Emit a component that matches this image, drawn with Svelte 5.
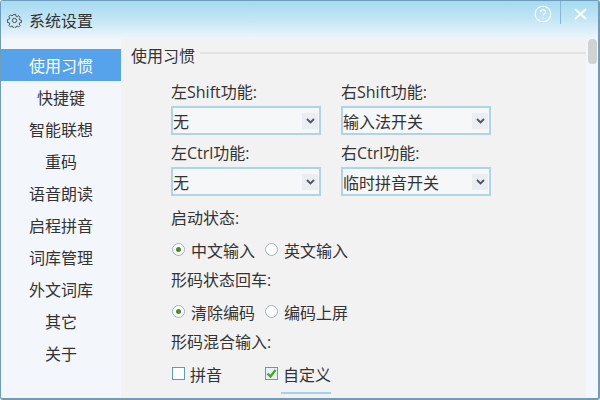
<script lang="ts">
  const menu = ["使用习惯", "快捷键", "智能联想", "重码", "语音朗读", "启程拼音", "词库管理", "外文词库", "其它", "关于"];
  let active = $state(0);
  const selects = [
    { label: "左Shift功能:", value: "无" },
    { label: "右Shift功能:", value: "输入法开关" },
    { label: "左Ctrl功能:", value: "无" },
    { label: "右Ctrl功能:", value: "临时拼音开关" }
  ];
  const radios = [
    { label: "启动状态:", options: ["中文输入", "英文输入"] },
    { label: "形码状态回车:", options: ["清除编码", "编码上屏"] }
  ];
</script>

<div class="window">
  <header class="titlebar">
    <svg class="gear" width="15" height="15" viewBox="0 0 16 16" fill="none" stroke="#4a4a4a" stroke-width="1">
      <circle cx="8" cy="8" r="2.3" />
      <path d="M6.8 1.5h2.4l.3 1.8 1.3.6 1.5-1 1.7 1.7-1 1.5.6 1.3 1.8.3v2.4l-1.8.3-.6 1.3 1 1.5-1.7 1.7-1.5-1-1.3.6-.3 1.8H6.8l-.3-1.8-1.3-.6-1.5 1-1.7-1.7 1-1.5-.6-1.3-1.8-.3V6.8l1.8-.3.6-1.3-1-1.5 1.7-1.7 1.5 1 1.3-.6z" />
    </svg>
    <span class="title">系统设置</span>
    <div class="controls">
      <button class="ctl help" aria-label="帮助">
        <svg width="18" height="18" viewBox="0 0 18 18" fill="none" stroke="#fff" stroke-width="1.1">
          <circle cx="9" cy="9" r="7.8" />
          <path d="M6.6 7.2c0-1.5 1.1-2.4 2.5-2.4s2.4.9 2.4 2.1c0 1.9-2.4 1.9-2.4 3.7" />
          <path d="M9.1 12.2v1.2" />
        </svg>
      </button>
      <button class="ctl close" aria-label="关闭">
        <svg width="13" height="12" viewBox="0 0 13 12" fill="none" stroke="#fff" stroke-width="2">
          <path d="M1 1l11 10M12 1l-11 10" />
        </svg>
      </button>
    </div>
  </header>

  <div class="body">
    <nav class="sidebar">
      {#each menu as item, i}
        <button class="item" class:active={i === active} onclick={() => (active = i)}>{item}</button>
      {/each}
    </nav>

    <main class="content">
      <div class="section-head">
        <span>使用习惯</span>
        <i></i>
      </div>

      <div class="form">
        <div class="select-grid">
          {#each selects as s}
            <div class="field">
              <div class="label">{s.label}</div>
              <div class="select">
                <span>{s.value}</span>
                <span class="arrow">
                  <svg width="9" height="6" viewBox="0 0 9 6" fill="none" stroke="#4c5560" stroke-width="1.8">
                    <path d="M1 1l3.5 3.4L8 1" />
                  </svg>
                </span>
              </div>
            </div>
          {/each}
        </div>

        {#each radios as group}
          <div class="label group-label">{group.label}</div>
          <div class="opts">
            {#each group.options as opt, i}
              <div class="opt">
                <span class="radio" class:on={i === 0}></span>
                <span>{opt}</span>
              </div>
            {/each}
          </div>
        {/each}

        <div class="label group-label">形码混合输入:</div>
        <div class="opts">
          <div class="opt tight">
            <span class="check"></span>
            <span>拼音</span>
          </div>
          <div class="opt tight">
            <span class="check checked">
              <svg width="11" height="11" viewBox="0 0 11 11" fill="none" stroke="#45a815" stroke-width="2.2">
                <path d="M1.5 5.5l3 3 5-6.5" />
              </svg>
            </span>
            <span class="underlined">自定义</span>
          </div>
        </div>
      </div>
    </main>

    <div class="scrollbar"><div class="thumb"></div></div>
  </div>
</div>

<style>
  :global(body) {
    margin: 0;
  }

  .window {
    width: 600px;
    height: 400px;
    box-sizing: border-box;
    border: 1px solid #6f9cbc;
    border-width: 1px 2px 2px 1px;
    border-radius: 3px;
    display: flex;
    flex-direction: column;
    overflow: hidden;
    background: #f3f7fb;
    font-family: "Open Sans", "Noto Sans CJK SC", sans-serif;
    color: #333;
    font-size: 16px;
  }

  .titlebar {
    height: 38px;
    flex: none;
    display: flex;
    align-items: center;
    padding-left: 6px;
    gap: 7px;
    background: linear-gradient(180deg, #a5daf0 0%, #c4e6f5 50%, #eef6fb 100%);
  }

  .gear {
    flex: none;
  }

  .title {
    font-size: 16px;
  }

  .controls {
    margin-left: auto;
    display: flex;
    align-self: flex-start;
  }

  .ctl {
    background: none;
    border: none;
    padding: 0;
    display: flex;
    align-items: center;
    justify-content: center;
    box-sizing: content-box;
  }

  .help {
    width: 35px;
    height: 23px;
    border-right: 1px solid #88b8d0;
  }

  .help svg {
    margin-top: 3px;
    margin-left: 1px;
  }

  .close {
    width: 35px;
    height: 25px;
    padding-left: 2px;
  }

  .body {
    flex: 1;
    min-height: 0;
    display: flex;
  }

  .sidebar {
    width: 120px;
    flex: none;
    display: flex;
    flex-direction: column;
    padding-top: 10px;
  }

  .item {
    height: 32px;
    flex: none;
    border: none;
    background: none;
    padding: 0;
    font: inherit;
    color: #333;
  }

  .item.active {
    background: #56a3ec;
    color: #fff;
  }

  .content {
    flex: 1;
    min-width: 0;
    background: #f2f2f2;
    overflow: hidden;
    padding: 3px 0 0 10px;
  }

  .section-head {
    display: flex;
    align-items: center;
    gap: 5px;
    height: 26px;
  }

  .section-head i {
    flex: 1;
    height: 2px;
    background: #e2e2e2;
    margin-bottom: 4px;
  }

  .form {
    padding-left: 40px;
    margin-top: 11px;
  }

  .select-grid {
    display: grid;
    grid-template-columns: 150px 150px;
    column-gap: 20px;
    margin-bottom: 2px;
  }

  .label {
    line-height: 27px;
    height: 27px;
  }

  .field {
    height: 61px;
  }

  .select {
    height: 29px;
    box-sizing: border-box;
    border: 2px solid #aed4e8;
    background: #f6f7f8;
    display: flex;
    align-items: center;
    justify-content: space-between;
  }

  .arrow {
    width: 16px;
    height: 16px;
    margin-right: 1px;
    background: #eaeef3;
    display: flex;
    align-items: center;
    justify-content: center;
  }

  .group-label {
    height: 31px;
    line-height: 31px;
  }

  .opts {
    display: grid;
    grid-template-columns: 93px 100px;
    height: 31px;
    align-items: center;
  }

  .opt {
    display: flex;
    align-items: center;
    gap: 6px;
  }

  .opt.tight {
    gap: 5px;
  }

  .radio {
    width: 11px;
    height: 11px;
    border: 1px solid #9cb3c4;
    border-radius: 50%;
    background: #fff;
    display: flex;
    align-items: center;
    justify-content: center;
    margin-left: 1px;
  }

  .radio.on::after {
    content: "";
    width: 5px;
    height: 5px;
    border-radius: 50%;
    background: #4c8a2a;
  }

  .check {
    width: 11px;
    height: 11px;
    border: 1px solid #5e9ac4;
    background: #fbfdfe;
    display: flex;
    align-items: center;
    justify-content: center;
    margin-left: 1px;
  }

  .check.checked {
    background: #e6f1f8;
  }

  .underlined {
    position: relative;
  }

  .underlined::after {
    content: "";
    position: absolute;
    left: -2px;
    right: 0;
    top: 30px;
    height: 2px;
    background: #a6d0e6;
  }

  .scrollbar {
    width: 12px;
    flex: none;
    background: #f3f7fb;
  }

  .thumb {
    width: 9px;
    height: 25px;
    margin-left: 2px;
    border-radius: 4px;
    background: #d2d2d2;
  }
</style>
